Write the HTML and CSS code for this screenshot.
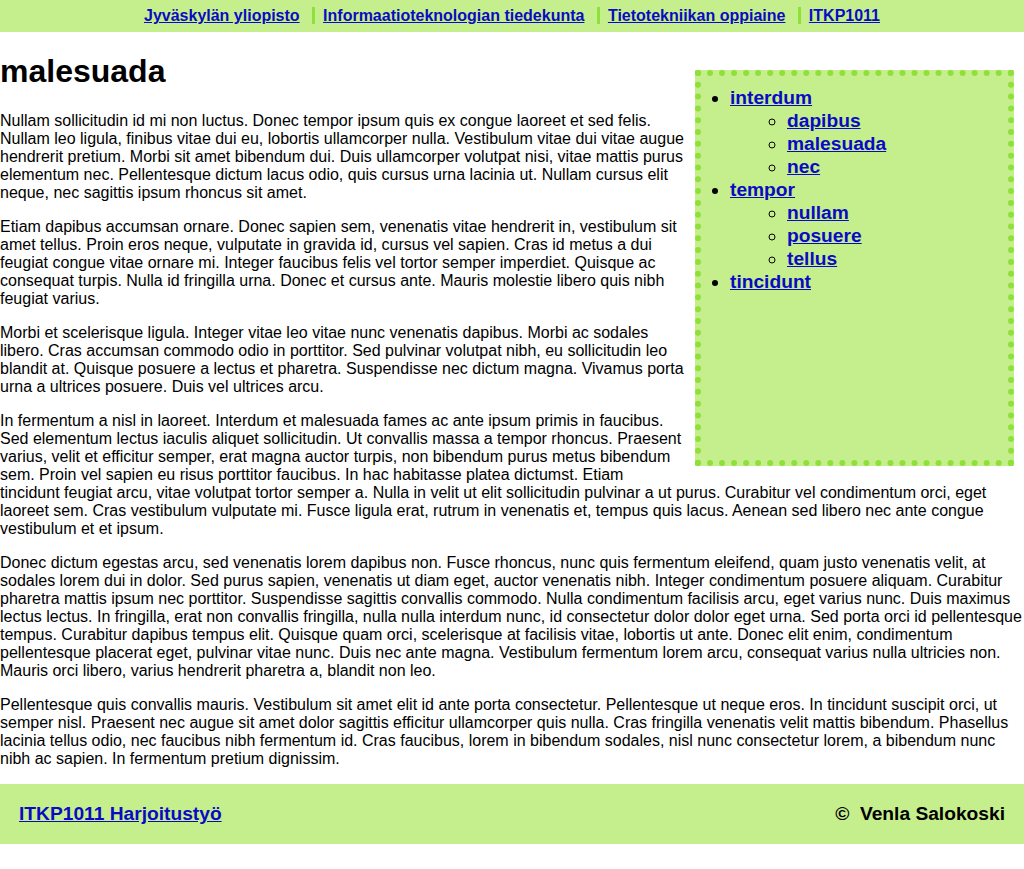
FILE: index.html
```html
<!DOCTYPE html>
<html lang="fi">
<head>
<meta charset="utf-8">
<title>malesuada</title>
<link rel="stylesheet" href="styles.css">
</head>
<body>
<header class="top">
  <ul class="crumbs">
    <li class="crumb"><a href="#">Jyväskylän yliopisto</a></li>
    <li class="crumb sep"><a href="#">Informaatioteknologian tiedekunta</a></li>
    <li class="crumb sep"><a href="#">Tietotekniikan oppiaine</a></li>
    <li class="crumb sep"><a href="#">ITKP1011</a></li>
  </ul>
</header>
<main class="main">
  <nav class="side">
    <ul class="menu">
      <li><a href="#">interdum</a>
        <ul class="sub">
          <li><a href="#">dapibus</a></li>
          <li><a href="#">malesuada</a></li>
          <li><a href="#">nec</a></li>
        </ul>
      </li>
      <li><a href="#">tempor</a>
        <ul class="sub">
          <li><a href="#">nullam</a></li>
          <li><a href="#">posuere</a></li>
          <li><a href="#">tellus</a></li>
        </ul>
      </li>
      <li><a href="#">tincidunt</a></li>
    </ul>
  </nav>
  <h1 class="title">malesuada</h1>
  <p class="text">Nullam sollicitudin id mi non luctus. Donec tempor ipsum quis ex congue laoreet et sed felis. Nullam leo ligula, finibus vitae dui eu, lobortis ullamcorper nulla. Vestibulum vitae dui vitae augue hendrerit pretium. Morbi sit amet bibendum dui. Duis ullamcorper volutpat nisi, vitae mattis purus elementum nec. Pellentesque dictum lacus odio, quis cursus urna lacinia ut. Nullam cursus elit neque, nec sagittis ipsum rhoncus sit amet.</p>
  <p class="text">Etiam dapibus accumsan ornare. Donec sapien sem, venenatis vitae hendrerit in, vestibulum sit amet tellus. Proin eros neque, vulputate in gravida id, cursus vel sapien. Cras id metus a dui feugiat congue vitae ornare mi. Integer faucibus felis vel tortor semper imperdiet. Quisque ac consequat turpis. Nulla id fringilla urna. Donec et cursus ante. Mauris molestie libero quis nibh feugiat varius.</p>
  <p class="text">Morbi et scelerisque ligula. Integer vitae leo vitae nunc venenatis dapibus. Morbi ac sodales libero. Cras accumsan commodo odio in porttitor. Sed pulvinar volutpat nibh, eu sollicitudin leo blandit at. Quisque posuere a lectus et pharetra. Suspendisse nec dictum magna. Vivamus porta urna a ultrices posuere. Duis vel ultrices arcu.</p>
  <p class="text">In fermentum a nisl in laoreet. Interdum et malesuada fames ac ante ipsum primis in faucibus. Sed elementum lectus iaculis aliquet sollicitudin. Ut convallis massa a tempor rhoncus. Praesent varius, velit et efficitur semper, erat magna auctor turpis, non bibendum purus metus bibendum sem. Proin vel sapien eu risus porttitor faucibus. In hac habitasse platea dictumst. Etiam tincidunt feugiat arcu, vitae volutpat tortor semper a. Nulla in velit ut elit sollicitudin pulvinar a ut purus. Curabitur vel condimentum orci, eget laoreet sem. Cras vestibulum vulputate mi. Fusce ligula erat, rutrum in venenatis et, tempus quis lacus. Aenean sed libero nec ante congue vestibulum et et ipsum.</p>
  <p class="text">Donec dictum egestas arcu, sed venenatis lorem dapibus non. Fusce rhoncus, nunc quis fermentum eleifend, quam justo venenatis velit, at sodales lorem dui in dolor. Sed purus sapien, venenatis ut diam eget, auctor venenatis nibh. Integer condimentum posuere aliquam. Curabitur pharetra mattis ipsum nec porttitor. Suspendisse sagittis convallis commodo. Nulla condimentum facilisis arcu, eget varius nunc. Duis maximus lectus lectus. In fringilla, erat non convallis fringilla, nulla nulla interdum nunc, id consectetur dolor dolor eget urna. Sed porta orci id pellentesque tempus. Curabitur dapibus tempus elit. Quisque quam orci, scelerisque at facilisis vitae, lobortis ut ante. Donec elit enim, condimentum pellentesque placerat eget, pulvinar vitae nunc. Duis nec ante magna. Vestibulum fermentum lorem arcu, consequat varius nulla ultricies non. Mauris orci libero, varius hendrerit pharetra a, blandit non leo.</p>
  <p class="text">Pellentesque quis convallis mauris. Vestibulum sit amet elit id ante porta consectetur. Pellentesque ut neque eros. In tincidunt suscipit orci, ut semper nisl. Praesent nec augue sit amet dolor sagittis efficitur ullamcorper quis nulla. Cras fringilla venenatis velit mattis bibendum. Phasellus lacinia tellus odio, nec faucibus nibh fermentum id. Cras faucibus, lorem in bibendum sodales, nisl nunc consectetur lorem, a bibendum nunc nibh ac sapien. In fermentum pretium dignissim.</p>
</main>
<footer class="foot">
  <a class="foot-link" href="#">ITKP1011 Harjoitustyö</a>
  <span class="author">©&nbsp; Venla Salokoski</span>
</footer>
</body>
</html>
```

FILE: styles.css
```css
html, body {
  margin: 0;
  padding: 0;
  background: #ffffff;
}

body {
  font-family: "Liberation Sans", Arial, sans-serif;
  font-size: 16px;
  color: #000000;
}

a {
  color: #0a0ac4;
  font-weight: bold;
}

.top {
  background: #c5ee8c;
  height: 32px;
  text-align: center;
}

.crumbs {
  list-style: none;
  margin: 0;
  padding: 7px 0 0;
}

.crumb {
  display: inline;
  padding: 0 8px;
}

.crumb.sep {
  border-left: 3px solid #90e03c;
}

.main {
  display: flow-root;
}

.side {
  float: right;
  box-sizing: border-box;
  width: 319px;
  height: 396px;
  margin: 38px 10px 10px 10px;
  background: #c5ee8c;
  border: 6px dotted #90e03c;
  font-size: 19.2px;
  line-height: 23px;
}

.menu {
  margin: 10px 0 0;
  padding: 0 0 0 29px;
  list-style: disc;
}

.sub {
  margin: 0;
  padding: 0 0 0 57px;
  list-style: circle;
}

.title {
  font-size: 32px;
  margin: 21.44px 0 21.5px;
}

.text {
  margin: 16px 0;
}

.foot {
  background: #c5ee8c;
  height: 60px;
  box-sizing: border-box;
  padding: 0 19px;
  display: flex;
  align-items: center;
  justify-content: space-between;
  font-size: 19.2px;
}

.author {
  font-weight: bold;
}
```
